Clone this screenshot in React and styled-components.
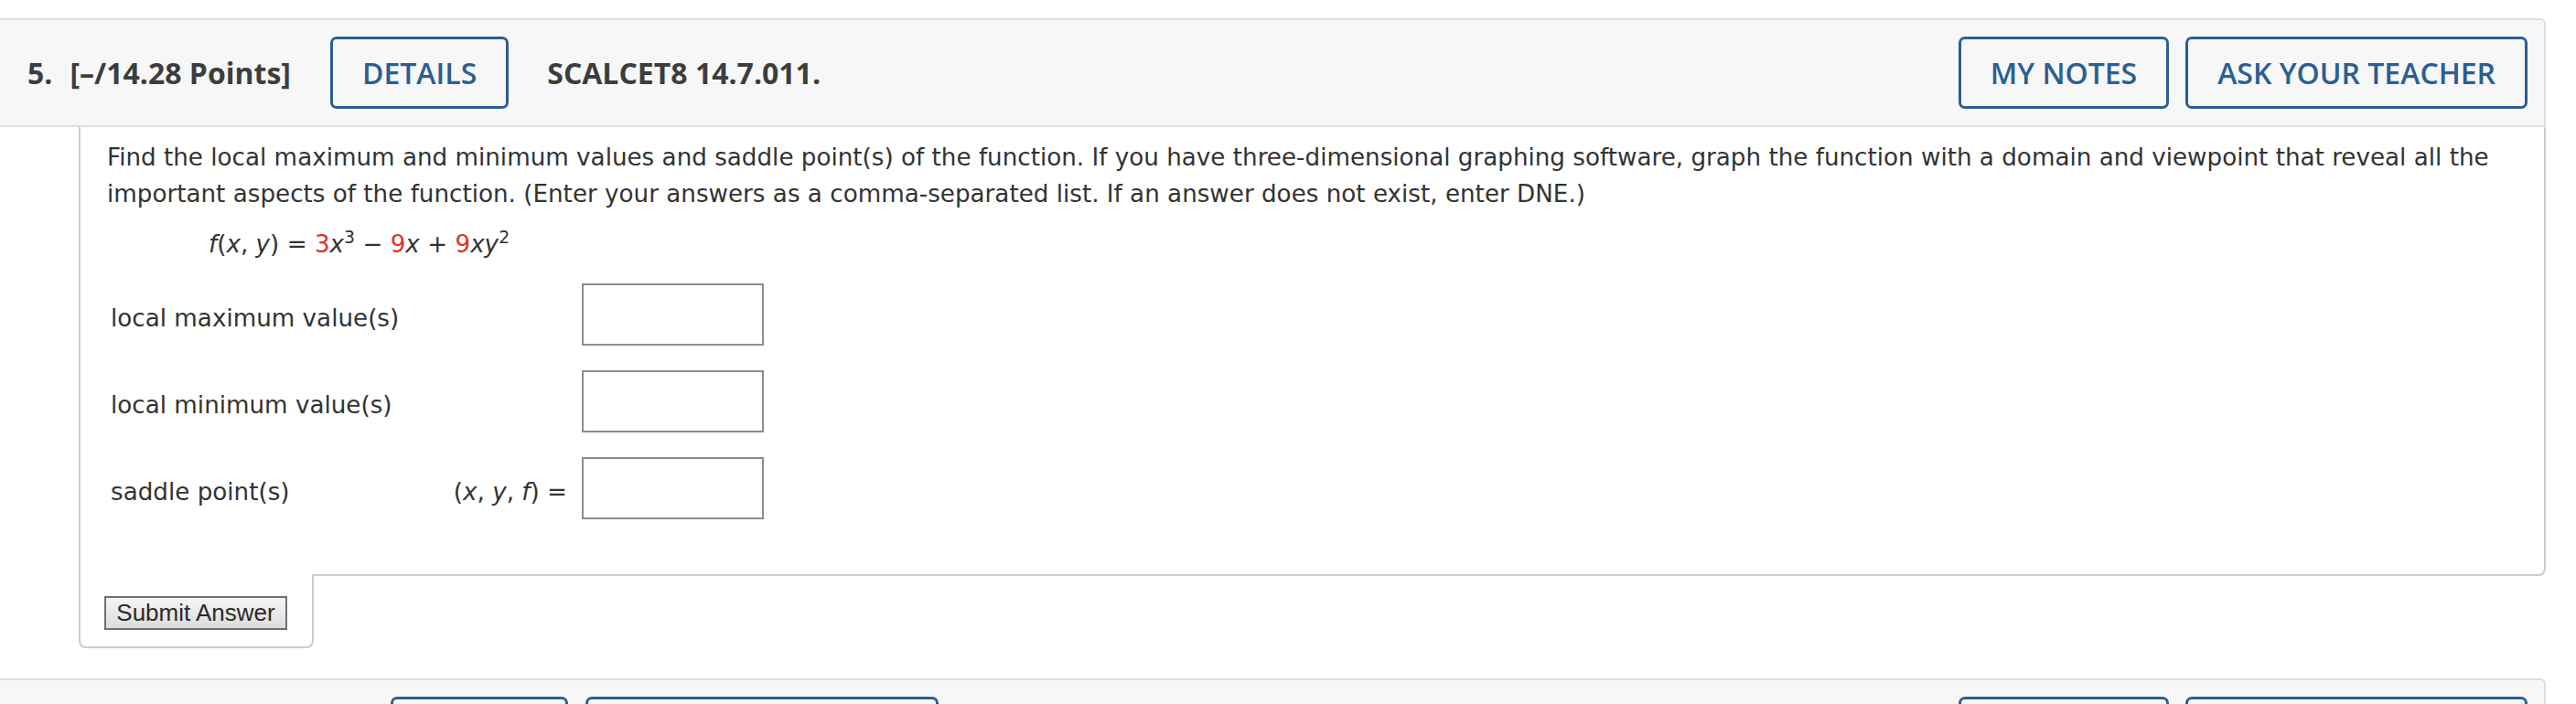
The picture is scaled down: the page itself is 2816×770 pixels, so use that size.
import React from "react";
import styled, { createGlobalStyle } from "styled-components";

const GlobalStyle = createGlobalStyle`
	html, body {
		margin: 0;
		padding: 0;
		background: #ffffff;
	}
`;

const Page = styled.div`
	padding: 20px 33px 0 0;
	font-family: "DejaVu Sans", Verdana, sans-serif;
	color: #333333;
`;

const Question = styled.div`
	display: flex;
	flex-direction: column;
	margin-bottom: 33px;
`;

const Header = styled.div`
	display: flex;
	align-items: center;
	background: #f7f7f7;
	border: 2px solid #dedede;
	border-left: none;
	border-top-right-radius: 6px;
	padding: 18px 18px 18px 30px;
	font-family: "Open Sans", "Liberation Sans", sans-serif;
	font-size: 32px;
	color: #3d3d3d;
`;

const Num = styled.span`
	font-weight: 700;
	margin-right: 19px;
`;

const Points = styled.span`
	font-weight: 700;
	margin-right: 43px;
`;

const Code = styled.span`
	font-weight: 700;
	margin-left: 42px;
`;

const Spacer = styled.div`
	flex: 1;
`;

const HeadButton = styled.button`
	height: 79px;
	padding: 0 ${(p) => p.$pad || 32}px;
	margin-left: ${(p) => p.$gap || 0}px;
	border: 3px solid #2b5e93;
	border-radius: 7px;
	background: transparent;
	color: #2b5e93;
	font-family: "Open Sans", "Liberation Sans", sans-serif;
	font-size: 32px;
	font-weight: 600;
	white-space: nowrap;
`;

const Body = styled.div`
	margin-left: 86px;
	border: 2px solid #cccccc;
	border-top: none;
	border-bottom-right-radius: 8px;
	padding: 13px 30px 60px 29px;
	font-size: 26.2px;
	line-height: 40px;
`;

const Prompt = styled.p`
	margin: 0;
`;

const Formula = styled.div`
	margin: 15px 0 0 111px;
`;

const Var = styled.i`
	font-style: italic;
`;

const Rand = styled.span`
	color: #e2321f;
`;

const Sup = styled.sup`
	font-size: 0.72em;
	line-height: 0;
	vertical-align: 0.55em;
`;

const Answers = styled.div`
	display: flex;
	flex-direction: column;
	gap: 27px;
	margin: 23px 0 0 4px;
`;

const Row = styled.div`
	display: grid;
	grid-template-columns: 355px 128px 199px;
	column-gap: 16px;
	align-items: center;
`;

const Label = styled.div`
	padding-top: 8px;
	white-space: nowrap;
`;

const Prefix = styled.div`
	padding-top: 8px;
	text-align: right;
	white-space: nowrap;
`;

const AnswerBox = styled.input`
	box-sizing: border-box;
	width: 199px;
	height: 68px;
	border: 2px solid #8c8c8c;
	background: #ffffff;
	margin: 0;
`;

const SubmitTab = styled.div`
	align-self: flex-start;
	box-sizing: border-box;
	width: 257px;
	margin: -2px 0 0 86px;
	background: #ffffff;
	border: 2px solid #cccccc;
	border-top: none;
	border-radius: 0 0 8px 8px;
	padding: 24px 0 18px 26px;
`;

const SubmitButton = styled.button`
	box-sizing: border-box;
	width: 200px;
	height: 37px;
	padding: 0;
	border: 2px solid #707070;
	background: linear-gradient(#f5f5f5, #dcdcdc);
	color: #2a2a2a;
	font-family: "Liberation Sans", Arial, sans-serif;
	font-size: 26px;
	line-height: 33px;
`;

function QuestionHeader({ num, points, code, first }) {
	return (
		<Header>
			<Num>{num}</Num>
			<Points>{points}</Points>
			<HeadButton $pad={first ? 32 : 31}>DETAILS</HeadButton>
			{!first && (
				<HeadButton $gap={19} $pad={34}>
					PREVIOUS ANSWERS
				</HeadButton>
			)}
			<Code>{code}</Code>
			<Spacer />
			<HeadButton>MY NOTES</HeadButton>
			<HeadButton $gap={18}>ASK YOUR TEACHER</HeadButton>
		</Header>
	);
}

export default function App() {
	return (
		<>
			<GlobalStyle />
			<Page>
				<Question>
					<QuestionHeader
						first
						num="5."
						points="[–/14.28 Points]"
						code="SCALCET8 14.7.011."
					/>
					<Body>
						<Prompt>
							Find the local maximum and minimum values and saddle point(s) of the
							function. If you have three-dimensional graphing software, graph the
							function with a domain and viewpoint that reveal all the important
							aspects of the function. (Enter your answers as a comma-separated
							list. If an answer does not exist, enter DNE.)
						</Prompt>
						<Formula>
							<Var>f</Var>(<Var>x</Var>, <Var>y</Var>) = <Rand>3</Rand>
							<Var>x</Var>
							<Sup>3</Sup> − <Rand>9</Rand>
							<Var>x</Var> + <Rand>9</Rand>
							<Var>xy</Var>
							<Sup>2</Sup>
						</Formula>
						<Answers>
							<Row>
								<Label>local maximum value(s)</Label>
								<Prefix />
								<AnswerBox type="text" />
							</Row>
							<Row>
								<Label>local minimum value(s)</Label>
								<Prefix />
								<AnswerBox type="text" />
							</Row>
							<Row>
								<Label>saddle point(s)</Label>
								<Prefix>
									(<Var>x</Var>, <Var>y</Var>, <Var>f</Var>) =
								</Prefix>
								<AnswerBox type="text" />
							</Row>
						</Answers>
					</Body>
					<SubmitTab>
						<SubmitButton>Submit Answer</SubmitButton>
					</SubmitTab>
				</Question>
				<Question>
					<QuestionHeader
						num="6."
						points="[14.28/14.28 Points]"
						code="SCALCET8 14.7.013."
					/>
				</Question>
			</Page>
		</>
	);
}
